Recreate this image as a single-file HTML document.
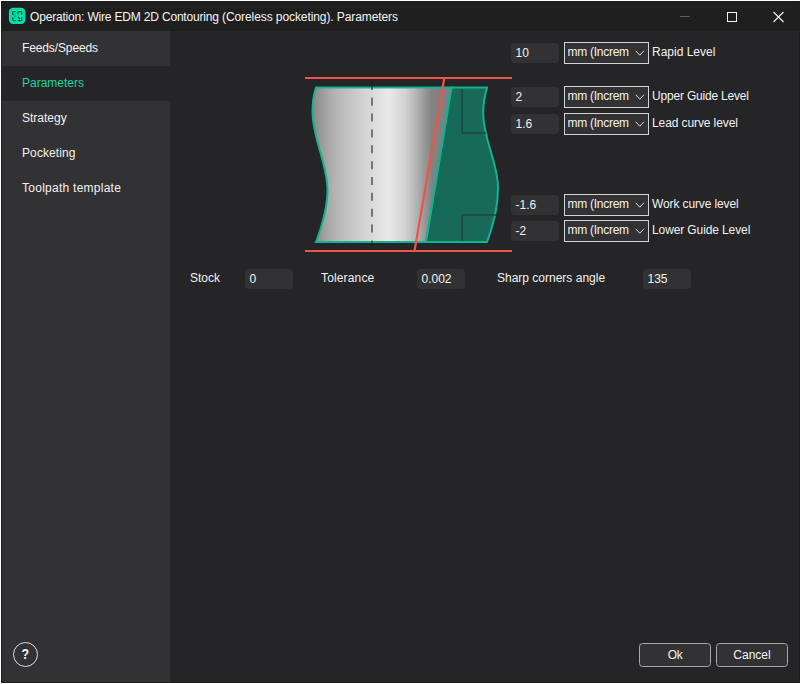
<!DOCTYPE html>
<html lang="en">
<head>
<meta charset="utf-8">
<title>Operation: Wire EDM 2D Contouring (Coreless pocketing). Parameters</title>
<style>
*{box-sizing:border-box;margin:0;padding:0}
html,body{width:801px;height:684px;overflow:hidden;background:#fff}
body{font-family:"Liberation Sans",sans-serif;font-size:12px;color:#f2f2f2;position:relative}
.abs{position:absolute}
#win{position:absolute;left:1px;top:1px;width:799px;height:682px;background:#252527;border:1px solid #1e1e1e;overflow:hidden}
/* coordinates inside #win are offset by 2px (1 white + 1 border) */
#title{position:absolute;left:0;top:0;width:797px;height:29px;background:#1f1f1f}
#title .txt{position:absolute;left:28px;top:1px;height:29px;line-height:29px;font-size:12px;letter-spacing:-0.135px;white-space:nowrap;color:#f5f5f5}
#side{position:absolute;left:0;top:29px;width:168px;height:651px;background:#323234}
.nav{position:absolute;left:0;width:168px;height:35px;line-height:35px;padding-left:20px;white-space:nowrap;color:#f2f2f2}
.nav.sel{background:#252527;color:#1fd19f}
.lbl{position:absolute;white-space:nowrap;height:20px;line-height:20px;color:#f2f2f2}
.inp{position:absolute;width:48px;height:20px;background:#323234;border-radius:4px;line-height:21px;padding-left:4.5px;color:#f2f2f2;white-space:nowrap}
.sel2{position:absolute;left:562px;width:85px;height:22px;background:#323234;border:1px solid #d4d4d4;line-height:20px;padding-left:2.5px;white-space:nowrap;overflow:hidden}
.sel2 span{display:block;width:63px;letter-spacing:-0.27px;height:20px;line-height:18px;overflow:hidden;white-space:nowrap}
.sel2 svg{position:absolute;left:70px;top:7px}
.btn{position:absolute;top:641px;width:72px;height:24px;border:1px solid #a8a8a8;border-radius:3.5px;background:#323234;text-align:center;line-height:22px;color:#f2f2f2}
</style>
</head>
<body>
<div id="win">
  <div id="title">
    <svg class="abs" style="left:6px;top:4px" width="20" height="20" viewBox="0 0 20 20">
      <rect x="0.9" y="1.7" width="16.4" height="16.3" rx="4.2" fill="#05e0a8"/>
      <g transform="translate(0.9 1.7)" fill="none" stroke="#0c5c49" stroke-width="1.25" stroke-linecap="round">
        <path d="M6.4 3.8H4.7Q3.6 3.8 3.6 4.9V5.7Q3.6 6.6 4.3 6.7"/>
        <path d="M3.9 9.9V11.9Q3.9 12.9 4.9 12.9H6.8"/>
        <path d="M9 6.3V4.9Q9 3.8 10.1 3.8H11.8Q12.9 3.8 12.9 4.9V6.7"/>
        <path d="M9.4 12.9H11.8Q12.9 12.9 12.9 11.8V9.9"/>
        <path d="M9.4 9.6L10.8 11"/>
        <path d="M6.2 7.2V9" stroke="#0c5c49" stroke-opacity="0.35" stroke-width="1.6"/>
      </g>
    </svg>
    <div class="txt"><span style="letter-spacing:-0.18px">Operation: Wire EDM 2D Contouring</span><span style="letter-spacing:-0.09px"> (Coreless pocketing). Parameters</span></div>
    <svg class="abs" style="left:676px;top:8px" width="110" height="16" viewBox="0 0 110 16">
      <path d="M2 6.5H12" stroke="#5c5c5c" stroke-width="1" fill="none"/>
      <rect x="49.5" y="2.5" width="9" height="9" stroke="#f2f2f2" stroke-width="1" fill="none"/>
      <path d="M95.5 2L105.5 12M105.5 2L95.5 12" stroke="#f2f2f2" stroke-width="1.1" fill="none"/>
    </svg>
  </div>
  <div id="side">
    <div class="nav" style="top:0;letter-spacing:-0.12px">Feeds/Speeds</div>
    <div class="nav sel" style="top:35px">Parameters</div>
    <div class="nav" style="top:70px">Strategy</div>
    <div class="nav" style="top:105px;letter-spacing:0.1px">Pocketing</div>
    <div class="nav" style="top:140px;letter-spacing:0.26px">Toolpath template</div>
    <svg class="abs" style="left:10px;top:610px" width="28" height="28" viewBox="0 0 28 28">
      <circle cx="13.5" cy="13.5" r="12" fill="none" stroke="#dcdcdc" stroke-width="1"/>
      <text x="13.4" y="18.3" text-anchor="middle" font-family="Liberation Sans, sans-serif" font-weight="bold" font-size="15.5" textLength="7.6" lengthAdjust="spacingAndGlyphs" fill="#f5f5f5">?</text>
    </svg>
  </div>

  <!-- illustration -->
  <svg class="abs" style="left:298px;top:68px" width="220" height="190" viewBox="300 70 220 190">
    <defs>
      <linearGradient id="sil" x1="314" x2="452" y1="0" y2="0" gradientUnits="userSpaceOnUse">
        <stop offset="0" stop-color="#8a8a8a"/>
        <stop offset="0.08" stop-color="#a2a2a2"/>
        <stop offset="0.152" stop-color="#b4b4b4"/>
        <stop offset="0.297" stop-color="#cacaca"/>
        <stop offset="0.413" stop-color="#d9d9d9"/>
        <stop offset="0.543" stop-color="#e9e9e9"/>
        <stop offset="0.66" stop-color="#d2d2d2"/>
        <stop offset="0.746" stop-color="#b2b2b2"/>
        <stop offset="0.804" stop-color="#979797"/>
        <stop offset="0.855" stop-color="#828282"/>
        <stop offset="1" stop-color="#7e7e7e"/>
      </linearGradient>
    </defs>
    <!-- silver body -->
    <path d="M316 87.5 H451.5 L426 242 H316 C322 226 327.5 208 327.5 190 C327.5 164 312.5 138 312.5 112 C312.5 102 314 93 316 87.5 Z" fill="url(#sil)" stroke="#11b491" stroke-width="2" stroke-linejoin="miter"/>
    <!-- teal part -->
    <path d="M451.5 87.5 H487 C484.6 96 483.2 105 483.2 113 C483.2 141 498 161 498 188 C498 208 493 226 487 242 H426 Z" fill="#17695a" stroke="#11b491" stroke-width="2" stroke-linejoin="miter"/>
    <!-- brackets -->
    <path d="M462 89 V133 H486" fill="none" stroke="#21443f" stroke-width="1.6"/>
    <path d="M462 241 V215 H496" fill="none" stroke="#21443f" stroke-width="1.6"/>
    <!-- dashed axis -->
    <path d="M372 81.9 V249" stroke="#000" stroke-opacity="0.1" stroke-width="2" stroke-dasharray="8 7.85" fill="none"/>
    <path d="M372 86 V243.2" stroke="#000" stroke-opacity="0.4" stroke-width="2" stroke-dasharray="8 7.85" stroke-dashoffset="4.1" fill="none"/>
    <!-- red lines -->
    <path d="M305 78 H512 M305 251 H512 M444.3 78 L414.5 251" stroke="#ec5448" stroke-width="2.2" fill="none"/>
  </svg>

  <!-- rows -->
  <div class="inp" style="left:509px;top:41px">10</div>
  <div class="sel2" style="top:40px"><span>mm (Increm</span><svg width="10" height="7" viewBox="0 0 10 7"><path d="M0.7 0.8L4.8 5.2L8.9 0.8" fill="none" stroke="#dedede" stroke-width="1"/></svg></div>
  <div class="lbl" style="left:650px;top:40px">Rapid Level</div>

  <div class="inp" style="left:509px;top:85px">2</div>
  <div class="sel2" style="top:84px"><span>mm (Increm</span><svg width="10" height="7" viewBox="0 0 10 7"><path d="M0.7 0.8L4.8 5.2L8.9 0.8" fill="none" stroke="#dedede" stroke-width="1"/></svg></div>
  <div class="lbl" style="left:650px;top:84px;letter-spacing:-0.19px">Upper Guide Level</div>

  <div class="inp" style="left:509px;top:112px">1.6</div>
  <div class="sel2" style="top:111px"><span>mm (Increm</span><svg width="10" height="7" viewBox="0 0 10 7"><path d="M0.7 0.8L4.8 5.2L8.9 0.8" fill="none" stroke="#dedede" stroke-width="1"/></svg></div>
  <div class="lbl" style="left:650px;top:111px;letter-spacing:-0.1px">Lead curve level</div>

  <div class="inp" style="left:509px;top:193px">-1.6</div>
  <div class="sel2" style="top:192px"><span>mm (Increm</span><svg width="10" height="7" viewBox="0 0 10 7"><path d="M0.7 0.8L4.8 5.2L8.9 0.8" fill="none" stroke="#dedede" stroke-width="1"/></svg></div>
  <div class="lbl" style="left:650px;top:192px;letter-spacing:-0.12px">Work curve level</div>

  <div class="inp" style="left:509px;top:219px">-2</div>
  <div class="sel2" style="top:218px"><span>mm (Increm</span><svg width="10" height="7" viewBox="0 0 10 7"><path d="M0.7 0.8L4.8 5.2L8.9 0.8" fill="none" stroke="#dedede" stroke-width="1"/></svg></div>
  <div class="lbl" style="left:650px;top:218px;letter-spacing:-0.11px">Lower Guide Level</div>

  <!-- bottom row -->
  <div class="lbl" style="left:188px;top:266px">Stock</div>
  <div class="inp" style="left:243px;top:267px">0</div>
  <div class="lbl" style="left:319px;top:266px;letter-spacing:0.15px">Tolerance</div>
  <div class="inp" style="left:415px;top:267px">0.002</div>
  <div class="lbl" style="left:495px;top:266px">Sharp corners angle</div>
  <div class="inp" style="left:641px;top:267px">135</div>

  <div class="btn" style="left:637px;letter-spacing:-0.4px">Ok</div>
  <div class="btn" style="left:714px">Cancel</div>
</div>
</body>
</html>
